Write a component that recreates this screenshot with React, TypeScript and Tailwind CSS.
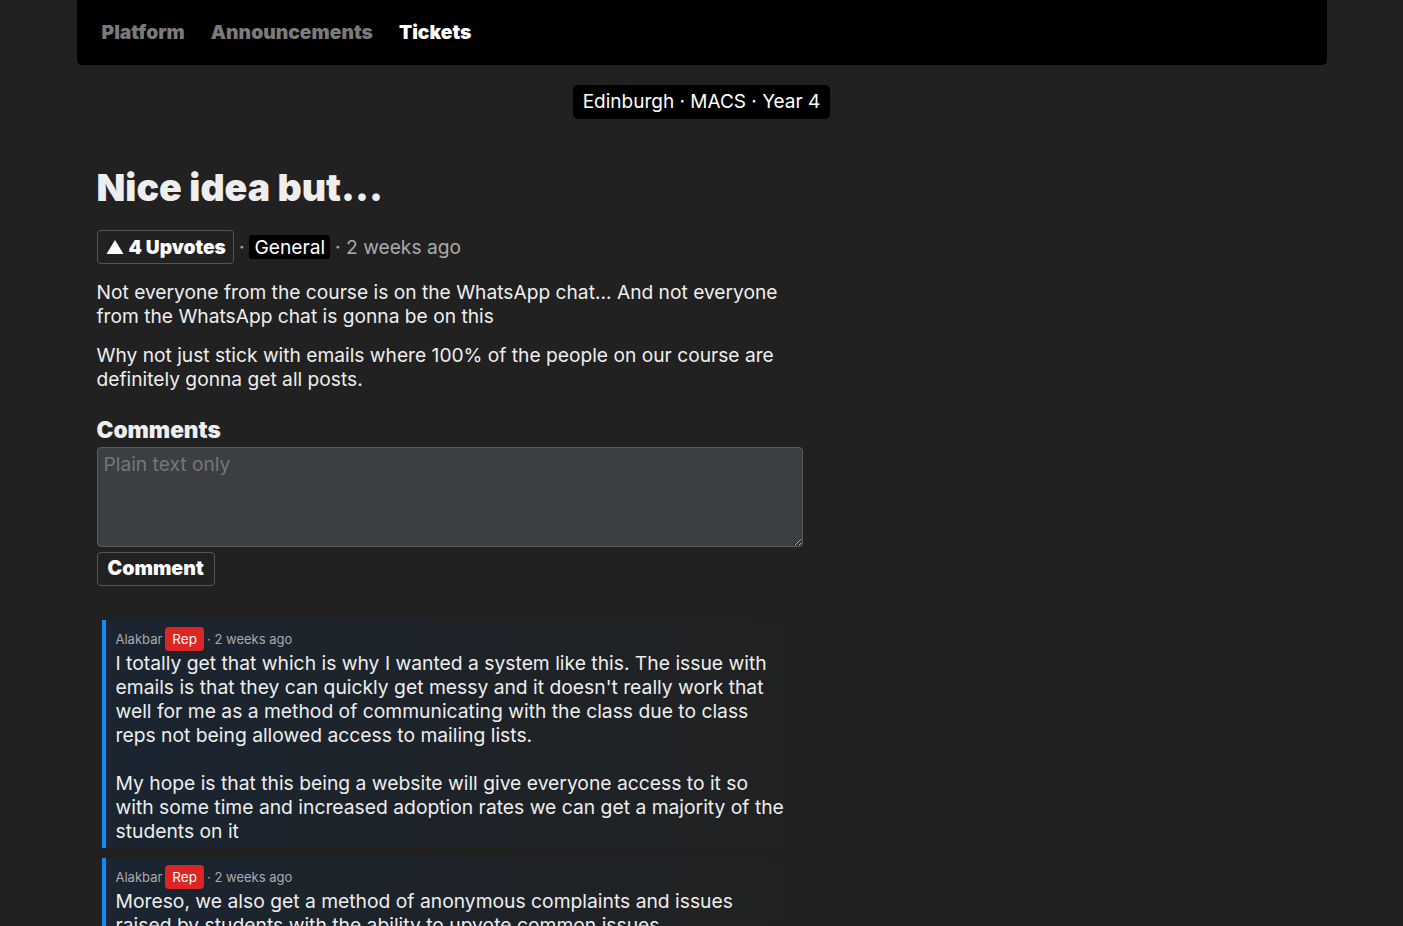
import { useState } from "react";

type Comment = {
  id: string;
  author: string;
  rep: boolean;
  when: string;
  body: string;
};

const COMMENTS: Comment[] = [
  {
    id: "c1",
    author: "Alakbar",
    rep: true,
    when: "2 weeks ago",
    body:
      "I totally get that which is why I wanted a system like this. The issue with emails is that they can quickly get messy and it doesn't really work that well for me as a method of communicating with the class due to class reps not being allowed access to mailing lists.\n\nMy hope is that this being a website will give everyone access to it so with some time and increased adoption rates we can get a majority of the students on it",
  },
  {
    id: "c2",
    author: "Alakbar",
    rep: true,
    when: "2 weeks ago",
    body:
      "Moreso, we also get a method of anonymous complaints and issues raised by students with the ability to upvote common issues.",
  },
];

export default function App() {
  const [text, setText] = useState("");

  return (
    <div className="min-h-screen bg-[#212121] text-[#eeeeee] font-['Inter',sans-serif]">
      <div className="max-w-[1250px] mx-auto">
        <nav className="h-[65px] bg-black rounded-b-[5px] flex items-center gap-[26px] px-[25px] text-[19.3px] font-black">
          <a className="text-[#7a7a7a]">Platform</a>
          <a className="text-[#7a7a7a]">Announcements</a>
          <a className="text-white">Tickets</a>
        </nav>

        <div className="flex justify-center mt-[20px]">
          <span className="bg-black rounded-[5px] px-[10px] h-[34px] flex items-center text-[19px] text-white">
            Edinburgh · MACS · Year 4
          </span>
        </div>

        <main className="px-[20px] pt-[47px] max-w-[746px]">
          <h1 className="text-[37.5px] leading-[44px] font-black text-[#eeeeee]">
            Nice idea but...
          </h1>

          <div className="mt-[20px] flex items-center gap-[5px] text-[19.2px] text-[#aaaaaa]">
            <button className="h-[34px] pl-[8px] pr-[7px] border border-[#555] rounded-[4px] flex items-center gap-[5px] text-white font-black text-[19.2px]">
              <svg width="18" height="16" viewBox="0 0 18 16">
                <path d="M9 1 L17.5 15 L0.5 15 Z" fill="white" />
              </svg>
              4 Upvotes
            </button>
            <span>·</span>
            <span className="bg-black text-white px-[5px] rounded-[3px] leading-[24px]">General</span>
            <span>· 2 weeks ago</span>
          </div>

          <div className="mt-[16px] text-[19.2px] leading-[24px] text-[#eeeeee] flex flex-col gap-[15px]">
            <p>
              Not everyone from the course is on the WhatsApp chat... And not everyone from the WhatsApp chat is gonna be on this
            </p>
            <p>
              Why not just stick with emails where 100% of the people on our course are definitely gonna get all posts.
            </p>
          </div>

          <h2 className="mt-[26px] text-[22.6px] leading-[26px] font-black">Comments</h2>
          <textarea
            value={text}
            onChange={(e) => setText(e.target.value)}
            placeholder="Plain text only"
            className="mt-[4px] block w-full h-[100px] bg-[#3b3f43] border border-[#5a5a5a] rounded-[4px] px-[6px] py-[3px] text-[19.2px] leading-[26px] text-white placeholder:text-[#777] outline-none"
          />
          <button className="mt-[5px] h-[34px] px-[10px] border border-[#555] rounded-[4px] text-[19.6px] font-black text-white">
            Comment
          </button>

          <div className="mt-[34px] ml-[5px] flex flex-col gap-[10px]">
            {COMMENTS.map((c) => (
              <div
                key={c.id}
                className="border-l-4 border-[#118cf0] bg-gradient-to-r from-[#1a2531] to-[#212121] pl-[10px] pr-[18px] pt-[7px] pb-[5px]"
              >
                <div className="flex items-center gap-[3px] text-[13px] text-[#aaaaaa] leading-[24px]">
                  <span>{c.author}</span>
                  {c.rep && (
                    <span className="bg-[#dc2626] text-white rounded-[4px] px-[7px] h-[24px] flex items-center text-[13.5px]">
                      Rep
                    </span>
                  )}
                  <span>· {c.when}</span>
                </div>
                <p className="whitespace-pre-line text-[19.3px] leading-[24px] text-[#eeeeee]">
                  {c.body}
                </p>
              </div>
            ))}
          </div>
        </main>
      </div>
    </div>
  );
}
